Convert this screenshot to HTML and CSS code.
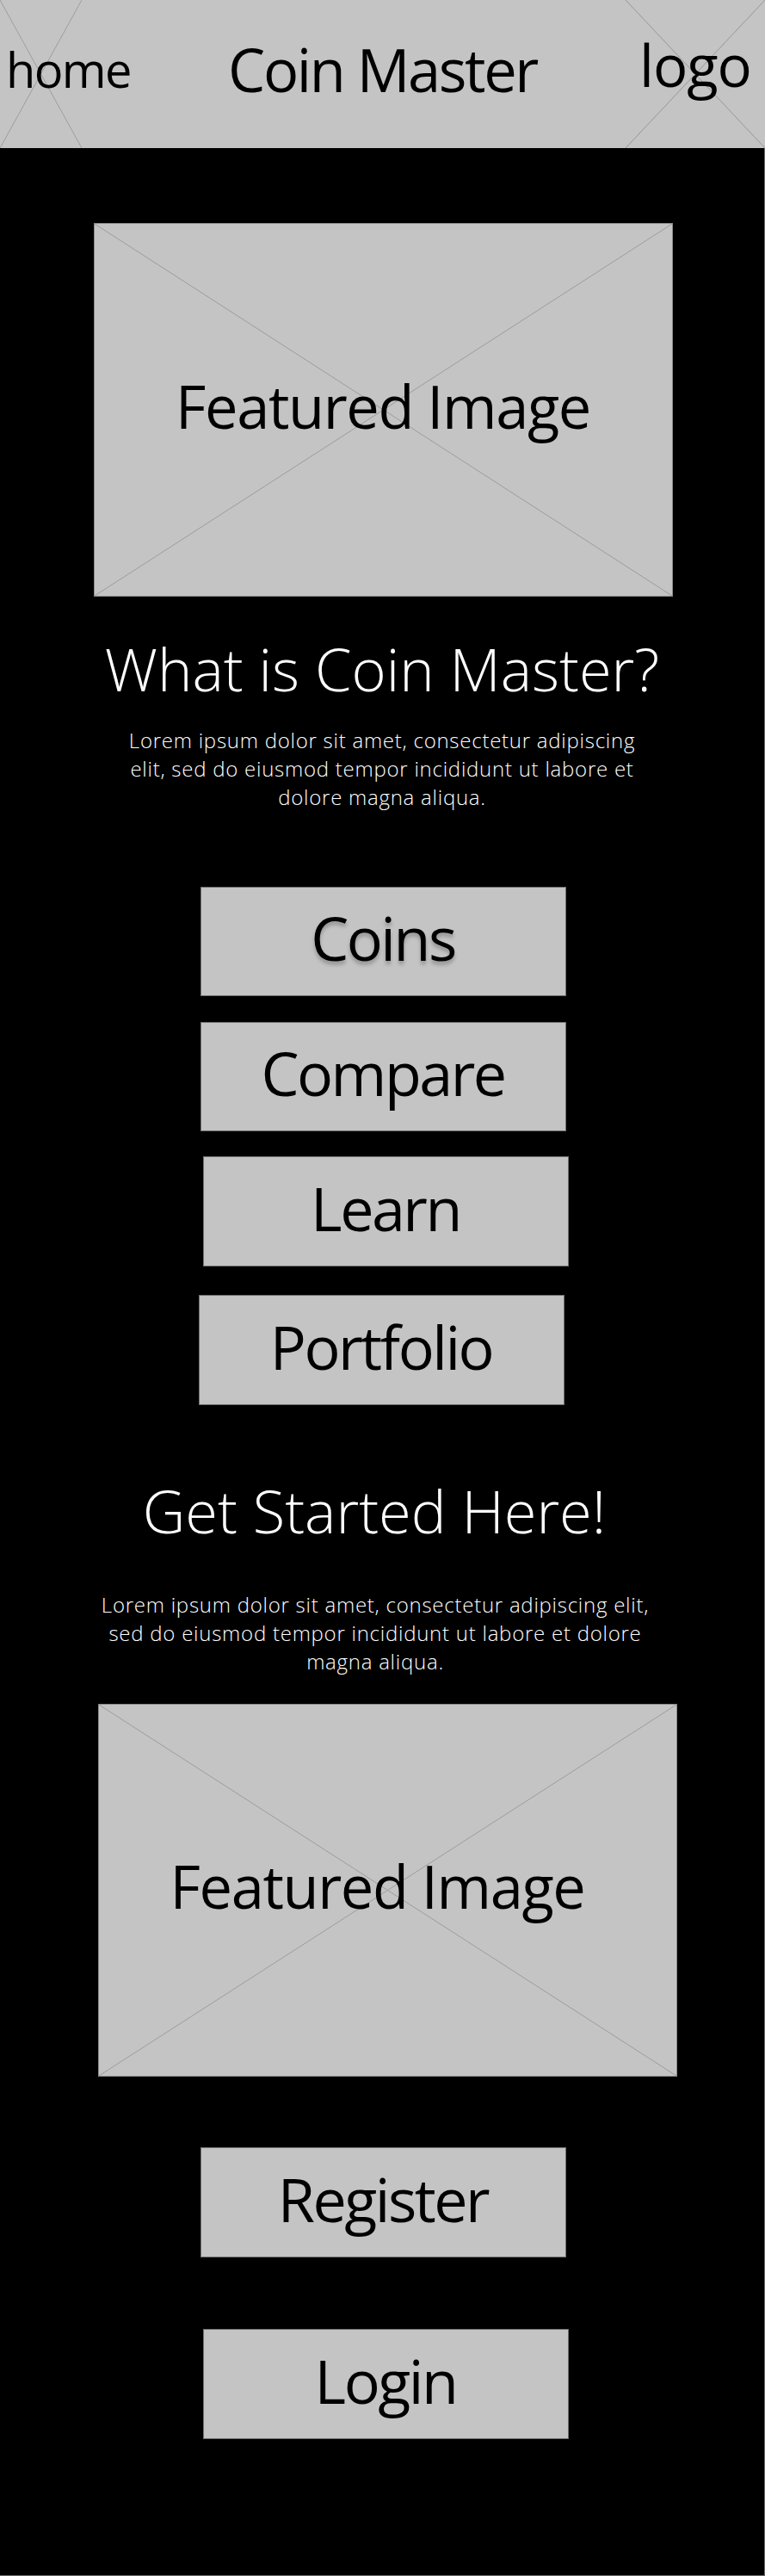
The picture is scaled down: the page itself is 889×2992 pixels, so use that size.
FILE: index.html
```html
<!DOCTYPE html>
<html lang="en">
<head>
<meta charset="utf-8">
<title>Coin Master</title>
<link rel="stylesheet" href="styles.css">
</head>
<body>
<header class="topbar">
  <div class="nav-side nav-left">
    <a class="ph ph-home" href="#">home</a>
  </div>
  <h1 class="brand">Coin Master</h1>
  <div class="nav-side nav-right">
    <span class="ph ph-logo">logo</span>
  </div>
</header>
<main class="page">
  <div class="feature feature-1"><span class="feature-label">Featured Image</span></div>
  <h2 class="title title-1">What is Coin Master?</h2>
  <p class="lead lead-1">Lorem ipsum dolor sit amet, consectetur adipiscing elit, sed do eiusmod tempor incididunt ut labore et dolore magna aliqua.</p>

  <a class="btn btn-coins" href="#"><span class="btn-shadow">Coins</span></a>
  <a class="btn btn-compare" href="#">Compare</a>
  <a class="btn btn-learn" href="#">Learn</a>
  <a class="btn btn-portfolio" href="#">Portfolio</a>

  <h2 class="title title-2">Get Started Here!</h2>
  <p class="lead lead-2">Lorem ipsum dolor sit amet, consectetur adipiscing elit, sed do eiusmod tempor incididunt ut labore et dolore magna aliqua.</p>
  <div class="feature feature-2"><span class="feature-label">Featured Image</span></div>

  <a class="btn btn-register" href="#">Register</a>
  <a class="btn btn-login" href="#">Login</a>
</main>
</body>
</html>
```
FILE: styles.css
```css
* { box-sizing: border-box; }

html, body {
  margin: 0;
  padding: 0;
  background: #000;
}

body {
  font-family: "Open Sans", "Liberation Sans", sans-serif;
  color: #000;
}

a { color: inherit; text-decoration: none; }

/* diagonal cross placeholder */
.ph,
.feature {
  background-color: #c4c4c4;
  background-image:
    linear-gradient(to top right, transparent calc(50% - 0.8px), #9a9a9a 50%, transparent calc(50% + 0.8px)),
    linear-gradient(to bottom right, transparent calc(50% - 0.8px), #9a9a9a 50%, transparent calc(50% + 0.8px));
}

/* ---------- header ---------- */
.topbar {
  height: 172px;
  background: #c4c4c4;
  display: grid;
  grid-template-columns: 162px 1fr 162px;
  align-items: start;
}

.nav-side { height: 172px; display: flex; }

.ph {
  height: 172px;
  display: block;
  white-space: nowrap;
  line-height: 1;
}

.ph-home {
  width: 95px;
  font-size: 56px;
  letter-spacing: -1.6px;
  padding: 52px 0 0 7px;
}

.ph-logo {
  width: 162px;
  font-size: 67px;
  letter-spacing: -1px;
  padding: 42px 0 0 16px;
}

.brand {
  margin: 0;
  padding-top: 47px;
  font-size: 68.6px;
  font-weight: 400;
  line-height: 1;
  letter-spacing: -2.4px;
  text-align: center;
}

/* ---------- main ---------- */
.page {
  display: flex;
  flex-direction: column;
  align-items: center;
  padding-bottom: 158px;
  border-right: 1px solid #6a6a6a;
  border-bottom: 1px solid #6a6a6a;
}

.feature {
  width: 673px;
  border: 1px solid #8a8a8a;
  display: flex;
  align-items: center;
  justify-content: center;
}

.feature-label {
  font-size: 68.6px;
  line-height: 1;
  letter-spacing: -1.4px;
  padding-bottom: 8px;
  white-space: nowrap;
}

.feature-1 {
  height: 434px;
  margin-top: 87px;
  margin-left: 2px;
}

.feature-2 {
  height: 433px;
  margin-top: 33px;
  margin-left: 12px;
  padding-right: 23px;
}

.title {
  margin: 0;
  color: #fff;
  font-weight: 300;
  font-size: 68.6px;
  line-height: 1;
  letter-spacing: 0;
  white-space: nowrap;
}

.title-1 { margin-top: 50px; }
.title-2 { margin-top: 89px; margin-right: 18px; }

.lead {
  margin: 0;
  color: #fff;
  font-weight: 300;
  font-size: 24px;
  line-height: 33px;
  letter-spacing: 0.75px;
  text-align: center;
}

.lead-1 { margin-top: 31px; width: 630px; }
.lead-2 { margin-top: 58px; width: 680px; margin-right: 16px; }

.btn {
  width: 425px;
  height: 128px;
  background: #c4c4c4;
  border: 1px solid #707070;
  display: flex;
  align-items: center;
  justify-content: center;
  font-size: 70px;
  line-height: 1;
  letter-spacing: -2.5px;
  padding-bottom: 8px;
}

.btn-shadow { text-shadow: 0 4px 4px rgba(0, 0, 0, 0.25); }

.btn-coins { margin-top: 88px; height: 127px; margin-left: 2px; }
.btn-compare { margin-top: 30px; height: 127px; margin-left: 2px; }
.btn-learn { margin-top: 29px; margin-left: 8px; }
.btn-portfolio { margin-top: 33px; margin-right: 2px; }
.btn-register { margin-top: 82px; margin-left: 2px; }
.btn-login { margin-top: 83px; margin-left: 8px; }
```
